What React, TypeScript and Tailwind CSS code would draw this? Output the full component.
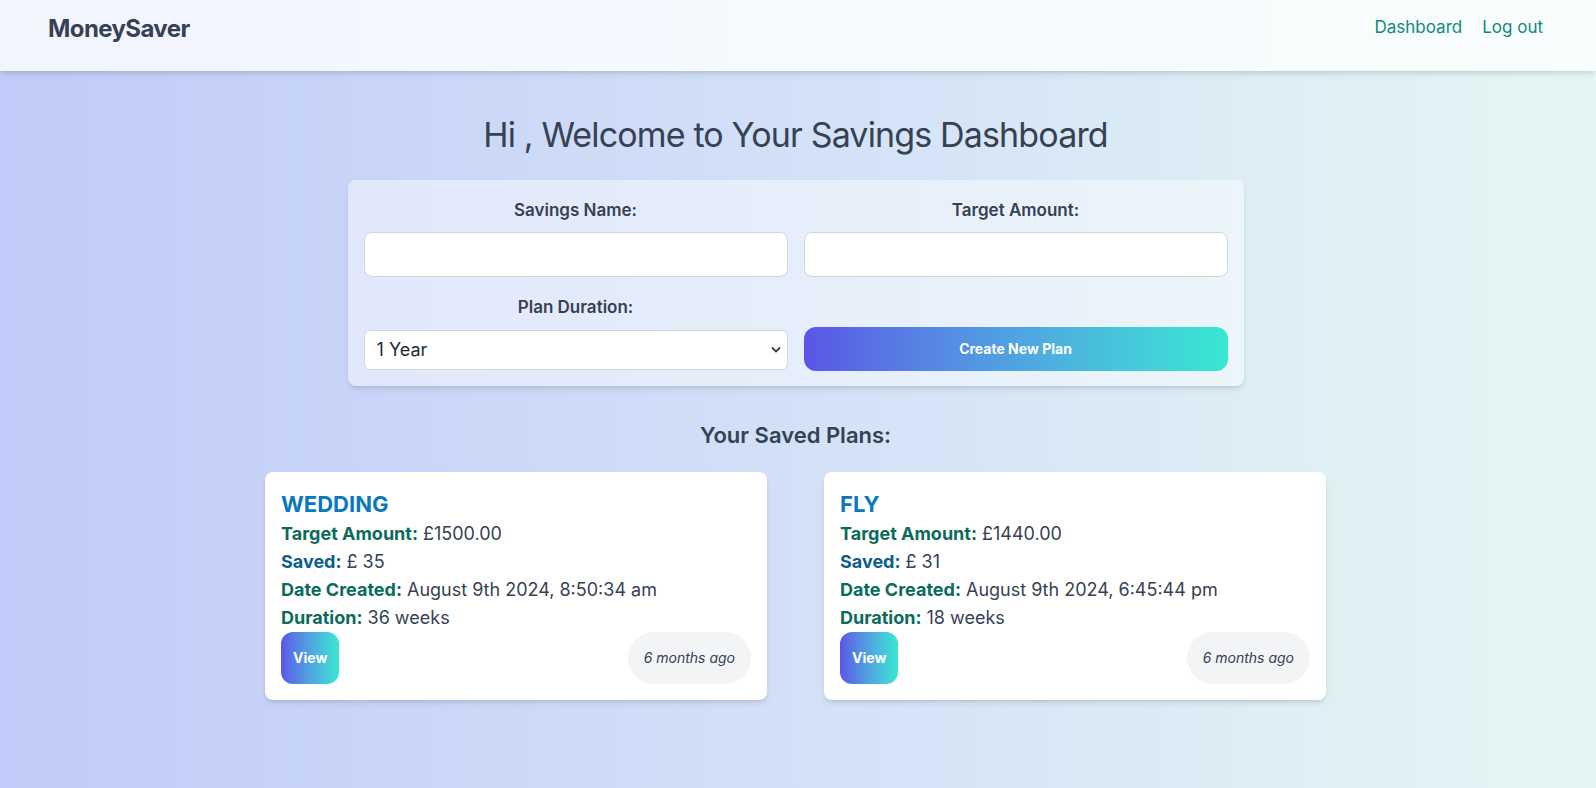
import { useState } from "react"

type Plan = {
  name: string
  target: string
  saved: string
  created: string
  duration: string
  ago: string
}

const plans: Plan[] = [
  {
    name: "WEDDING",
    target: "£1500.00",
    saved: "£ 35",
    created: "August 9th 2024, 8:50:34 am",
    duration: "36 weeks",
    ago: "6 months ago",
  },
  {
    name: "FLY",
    target: "£1440.00",
    saved: "£ 31",
    created: "August 9th 2024, 6:45:44 pm",
    duration: "18 weeks",
    ago: "6 months ago",
  },
]

function PlanCard({ plan }: { plan: Plan }) {
  return (
    <div className="w-[502px] rounded-lg bg-white p-4 shadow-md">
      <h3 className="text-[22px] font-bold leading-8 text-[#0a78bd]">{plan.name}</h3>
      <div className="text-lg leading-7 text-gray-700">
        <p>
          <span className="font-bold text-[#0b6b5b]">Target Amount:</span> {plan.target}
        </p>
        <p>
          <span className="font-bold text-[#0b5d8f]">Saved:</span> {plan.saved}
        </p>
        <p>
          <span className="font-bold text-[#0b6b5b]">Date Created:</span> {plan.created}
        </p>
        <p>
          <span className="font-bold text-[#0b6b5b]">Duration:</span> {plan.duration}
        </p>
      </div>
      <div className="flex items-center justify-between">
        <button className="h-[52px] rounded-xl bg-linear-to-r from-[#5a55e6] to-[#36e8d2] px-3 text-sm font-bold text-white">
          View
        </button>
        <span className="flex h-[52px] items-center rounded-full bg-gray-100 px-4 text-sm italic text-gray-700">
          {plan.ago}
        </span>
      </div>
    </div>
  )
}

export default function App() {
  const [name, setName] = useState("")
  const [amount, setAmount] = useState("")
  const [duration, setDuration] = useState("1")

  return (
    <div className="min-h-screen bg-linear-to-r from-[#c0cbf9] to-[#e5f7f4] font-['Inter',sans-serif] text-gray-700">
      {/* Top bar */}
      <header className="flex h-[71px] items-center justify-between bg-white/80 pl-12 pr-[53px] shadow-md">
        <span className="-mt-[14px] text-2xl font-bold tracking-tight text-gray-700">MoneySaver</span>
        <nav className="-mt-[16px] flex gap-5 text-[17px] text-[#0f8a7c]">
          <a href="#">Dashboard</a>
          <a href="#">Log out</a>
        </nav>
      </header>

      <main className="flex flex-col items-center pr-[5px] pt-[44px]">
        <h1 className="text-[34px] leading-10 tracking-tight text-gray-700">Hi , Welcome to Your Savings Dashboard</h1>

        {/* New plan form */}
        <form
          className="mt-[25px] grid w-[896px] grid-cols-2 gap-x-4 gap-y-[18px] rounded-lg bg-white/45 p-4 shadow-md"
          onSubmit={(e) => e.preventDefault()}
        >
          <div>
            <label className="mt-0.5 mb-2.5 block text-center text-[17px] font-semibold leading-6">Savings Name:</label>
            <input
              value={name}
              onChange={(e) => setName(e.target.value)}
              className="h-[45px] w-full rounded-lg border border-gray-300 bg-white px-3 text-lg outline-none"
            />
          </div>
          <div>
            <label className="mt-0.5 mb-2.5 block text-center text-[17px] font-semibold leading-6">Target Amount:</label>
            <input
              value={amount}
              onChange={(e) => setAmount(e.target.value)}
              className="h-[45px] w-full rounded-lg border border-gray-300 bg-white px-3 text-lg outline-none"
            />
          </div>
          <div>
            <label className="mb-[11px] block text-center text-[17px] font-semibold leading-6">Plan Duration:</label>
            <div className="relative">
              <select
                value={duration}
                onChange={(e) => setDuration(e.target.value)}
                className="h-10 w-full appearance-none rounded-md border border-gray-300 bg-white pl-3 pr-8 text-lg text-gray-800 outline-none"
              >
                <option value="1">1 Year</option>
                <option value="2">2 Years</option>
                <option value="3">3 Years</option>
              </select>
              <svg
                className="pointer-events-none absolute right-[7px] top-1/2 -translate-y-1/2 text-gray-700"
                width="10"
                height="7"
                viewBox="0 0 10 7"
                fill="none"
              >
                <path d="M1.5 1.5L5 5L8.5 1.5" stroke="currentColor" strokeWidth="1.8" strokeLinecap="round" strokeLinejoin="round" />
              </svg>
            </div>
          </div>
          <div className="flex items-end">
            <button
              type="submit"
              className="mb-[-1px] h-11 w-full rounded-xl bg-linear-to-r from-[#5a55e6] to-[#36e8d2] text-sm font-bold text-white"
            >
              Create New Plan
            </button>
          </div>
        </form>

        <h2 className="mt-[33px] text-[22px] font-semibold leading-8 text-gray-700">Your Saved Plans:</h2>

        <div className="mt-[21px] flex justify-center gap-[57px]">
          {plans.map((p) => (
            <PlanCard key={p.name} plan={p} />
          ))}
        </div>
      </main>
    </div>
  )
}
